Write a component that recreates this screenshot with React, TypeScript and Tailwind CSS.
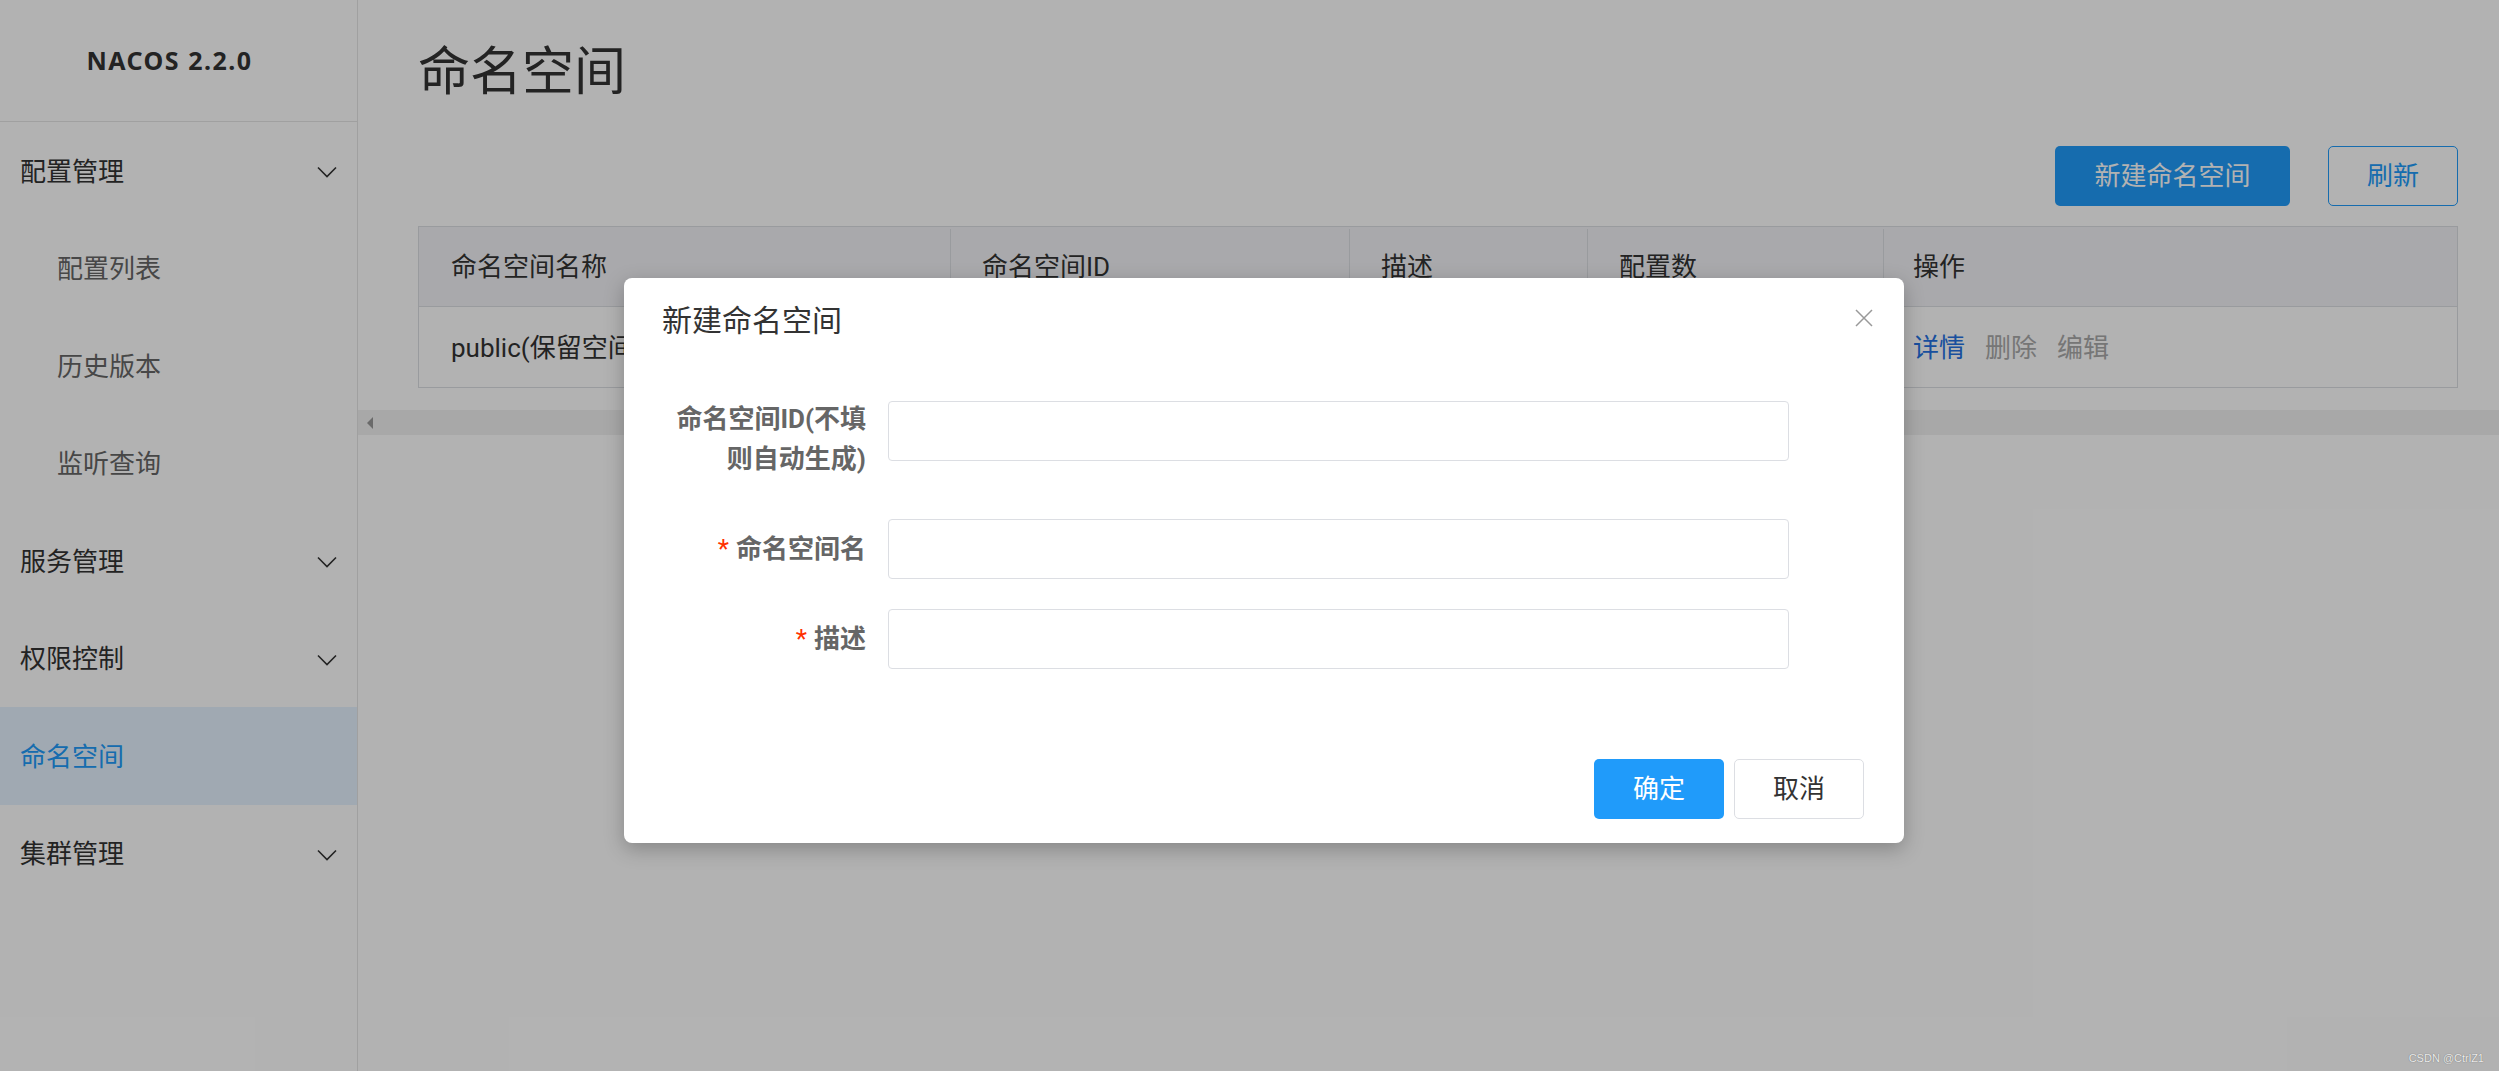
import React from "react";

function Chevron() {
  return (
    <svg width="20" height="12" viewBox="0 0 20 12" fill="none">
      <polyline points="1,1.5 10,10.5 19,1.5" stroke="#333" strokeWidth="1.6" />
    </svg>
  );
}

type NavItem = { label: string; level: number; chevron?: boolean; active?: boolean };

const nav: NavItem[] = [
  { label: "配置管理", level: 0, chevron: true },
  { label: "配置列表", level: 1 },
  { label: "历史版本", level: 1 },
  { label: "监听查询", level: 1 },
  { label: "服务管理", level: 0, chevron: true },
  { label: "权限控制", level: 0, chevron: true },
  { label: "命名空间", level: 0, active: true },
  { label: "集群管理", level: 0, chevron: true },
];

export default function App() {
  return (
    <div className="relative w-[2499px] h-[1071px] overflow-hidden bg-white flex font-['Roboto','Noto_Sans_CJK_SC',sans-serif]">
      <aside className="w-[358px] h-full border-r border-[#e6e6e6] flex flex-col shrink-0">
        <div className="h-[122px] border-b border-[#e6e6e6] flex items-center justify-center pr-[18px]">
          <span className="font-['Noto_Sans',sans-serif] font-bold text-[25px] tracking-[1.5px] text-[#333]">
            NACOS 2.2.0
          </span>
        </div>
        {nav.map((it) => (
          <div
            key={it.label}
            className={
              "h-[97.5px] shrink-0 flex items-center justify-between pr-[20px] pt-[3px] text-[26px] " +
              (it.level === 1 ? "pl-[57px] text-[#666] " : "pl-[20px] text-[#333] ") +
              (it.active ? "bg-[#e5f3ff] !text-[#209bfa]" : "")
            }
          >
            <span>{it.label}</span>
            {it.chevron && <Chevron />}
          </div>
        ))}
      </aside>

      <main className="flex-1 flex flex-col min-w-0">
        <div className="pl-[60px] pr-[41px] pt-[47px]">
          <h1 className="text-[52px] leading-[52px] text-[#333] font-normal">命名空间</h1>
          <div className="mt-[47px] flex justify-end gap-[38px]">
            <button className="w-[235px] h-[60px] rounded-[5px] bg-[#209bfa] text-white text-[26px]">
              新建命名空间
            </button>
            <button className="w-[130px] h-[60px] rounded-[5px] border border-[#209bfa] text-[#209bfa] text-[26px]">
              刷新
            </button>
          </div>
          <div className="mt-[20px] w-[2040px] border border-[#dcdee3] text-[26px] text-[#333]">
            <div className="flex h-[80px] pt-[2px] bg-[#f2f3f7] border-b border-[#dcdee3]">
              <div className="w-[531px] flex items-center pl-[32px]">命名空间名称</div>
              <div className="w-[399px] border-l border-[#dcdee3] flex items-center pl-[31px]">命名空间ID</div>
              <div className="w-[238px] border-l border-[#dcdee3] flex items-center pl-[31px]">描述</div>
              <div className="w-[296px] border-l border-[#dcdee3] flex items-center pl-[31px]">配置数</div>
              <div className="flex-1 border-l border-[#dcdee3] flex items-center pl-[29px]">操作</div>
            </div>
            <div className="flex h-[80px] pt-[2px]">
              <div className="w-[531px] flex items-center pl-[32px]">public(保留空间)</div>
              <div className="w-[399px] flex items-center pl-[31px]"></div>
              <div className="w-[238px] flex items-center pl-[31px]">Public Namespace</div>
              <div className="w-[296px] flex items-center pl-[31px]">0</div>
              <div className="flex-1 flex items-center pl-[30px] gap-[20px]">
                <span className="text-[#2571e2]">详情</span>
                <span className="text-[#aaaaaa]">删除</span>
                <span className="text-[#aaaaaa]">编辑</span>
              </div>
            </div>
          </div>
        </div>
        <div className="mt-[22px] h-[25px] bg-[#f1f1f1] flex items-center pl-[9px]">
          <div className="w-0 h-0 border-y-[6px] border-y-transparent border-r-[6px] border-r-[#999]" />
        </div>
      </main>

      <div className="absolute inset-0 bg-black/30" />

      <div className="absolute left-[624px] top-[278px] w-[1280px] bg-white rounded-[8px] shadow-[0_6px_20px_rgba(0,0,0,0.25)]">
        <div className="h-[85px] flex items-center pl-[38px] text-[30px] text-[#333]">新建命名空间</div>
        <button className="absolute top-[31px] right-[31px] w-[18px] h-[18px]">
          <svg width="18" height="18" viewBox="0 0 18 18" fill="none">
            <path d="M1 1 L17 17 M17 1 L1 17" stroke="#999" strokeWidth="1.5" />
          </svg>
        </button>
        <div className="pt-[38px] text-[26px]">
          <div className="flex items-start mb-[40px]">
            <div className="w-[264px] pr-[22px] text-right font-bold text-[#666] leading-[40px] -mt-[2px]">
              命名空间ID(不填
              <br />
              则自动生成)
            </div>
            <div className="w-[901px] h-[60px] border border-[#dcdee3] rounded-[4px]" />
          </div>
          <div className="flex items-center mb-[30px]">
            <div className="w-[264px] pr-[22px] text-right font-bold text-[#666] leading-[40px]">
              <span className="text-[#ff3000] font-normal mr-[7px]">*</span>命名空间名
            </div>
            <div className="w-[901px] h-[60px] border border-[#dcdee3] rounded-[4px]" />
          </div>
          <div className="flex items-center">
            <div className="w-[264px] pr-[22px] text-right font-bold text-[#666] leading-[40px]">
              <span className="text-[#ff3000] font-normal mr-[7px]">*</span>描述
            </div>
            <div className="w-[901px] h-[60px] border border-[#dcdee3] rounded-[4px]" />
          </div>
          <div className="mt-[90px] flex justify-end gap-[10px] pr-[40px] pb-[24px]">
            <button className="w-[130px] h-[60px] rounded-[5px] bg-[#209bfa] text-white">确定</button>
            <button className="w-[130px] h-[60px] rounded-[5px] border border-[#dcdee3] bg-white text-[#333]">
              取消
            </button>
          </div>
        </div>
      </div>

      <div className="absolute right-[15px] bottom-[6px] text-[11px] leading-[14px] text-[#ececec] font-['Liberation_Sans',sans-serif] [text-shadow:0_0_1px_rgba(0,0,0,0.5)]">
        CSDN @CtrlZ1
      </div>
    </div>
  );
}
